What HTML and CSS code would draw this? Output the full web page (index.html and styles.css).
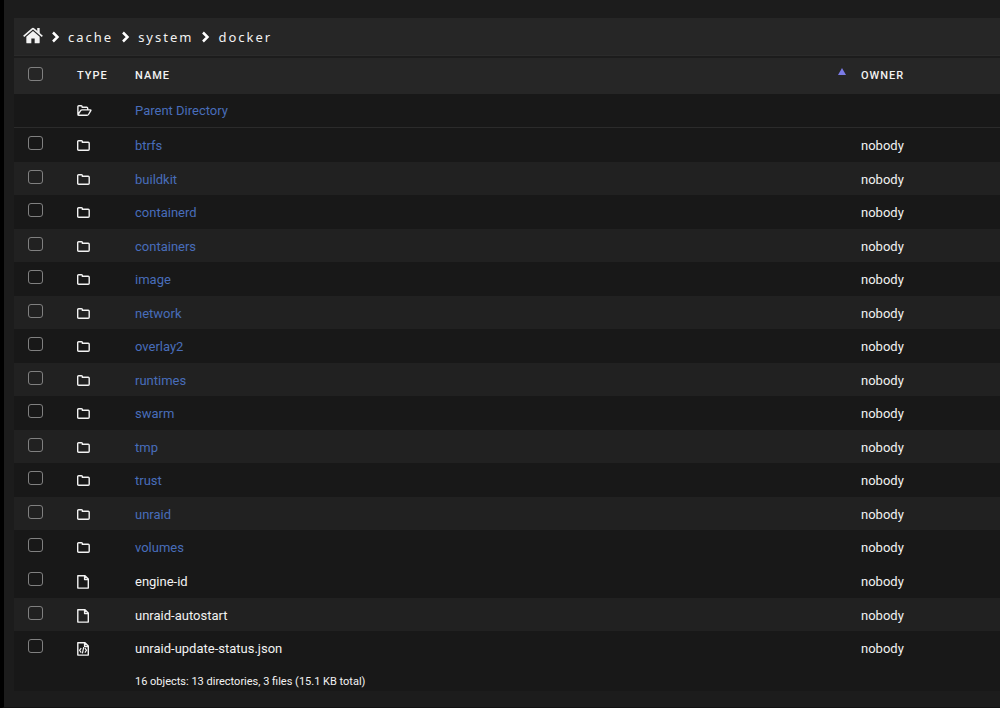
FILE: index.html
```
<!DOCTYPE html>
<html lang="en">
<head>
<meta charset="utf-8">
<title>docker</title>
<link rel="stylesheet" href="styles.css">
</head>
<body>
<svg class="sprite" aria-hidden="true">
  <symbol id="folder" viewBox="0 0 14 14"><path d="M.7 10.300V2.600q0-.9.9-.9H4.500q.9 0 .9.9v.7h5.800q1 0 1 1v6q0 1-1 1H1.700q-1 0-1-1z" fill="none" stroke="currentColor" stroke-width="1.400"/></symbol>
  <symbol id="open" viewBox="0 0 16 14"><path d="M.9 10.200V2.600q0-.9.9-.9h2.400q.9 0 .9.900v.7h4.600q1 0 1 1v1.600M1 10.600l2.600-4q.5-.7 1.400-.7h8.400q.9 0 .4.700l-2.300 3.900q-.5.800-1.400.8H1.700q-1 0-.7-.7z" fill="none" stroke="currentColor" stroke-width="1.400" stroke-linejoin="round"/></symbol>
  <symbol id="file" viewBox="0 0 14 14"><path d="M.8.8h7.200l3.300 3.300v9H.8zM7.600.8v3.700h3.700" fill="none" stroke="currentColor" stroke-width="1.400" stroke-linejoin="round"/></symbol>
  <symbol id="code" viewBox="0 0 14 14"><use href="#file"/><path d="M4.200 6 2.600 8.300l1.600 2.300M7.900 6l1.600 2.300-1.600 2.300M6.700 5.200 5.400 11.400" fill="none" stroke="currentColor" stroke-width="1.200"/></symbol>
  <symbol id="chevron" viewBox="0 0 8 12"><path d="M1.500 1.500 6 6l-4.500 4.500" fill="none" stroke="currentColor" stroke-width="2.500"/></symbol>
</svg>
<main class="page">
  <nav class="crumbs" aria-label="Path">
    <a href="#" aria-label="Home"><svg class="home" viewBox="0 0 18 16"><path d="M9 3.600 3 8.700v5.100q0 .8.800.8h3.700v-4.400h3v4.400h3.700q.8 0 .8-.8V8.700z" fill="currentColor"/><path d="M.6 8.300 8.200 1.800q.8-.7 1.600 0l7.600 6.500" fill="none" stroke="currentColor" stroke-width="1.500"/><path d="M12.800.8H15v5l-2.200-1.900z" fill="currentColor"/></svg></a>
    <svg class="chevron"><use href="#chevron"/></svg>
    <a href="#">cache</a>
    <svg class="chevron"><use href="#chevron"/></svg>
    <a href="#">system</a>
    <svg class="chevron"><use href="#chevron"/></svg>
    <a href="#">docker</a>
  </nav>
  <table class="files">
    <colgroup><col class="col-check"><col class="col-type"><col><col class="col-owner"></colgroup>
    <thead><tr><th><input type="checkbox" aria-label="Select all"></th><th>TYPE</th><th><div class="sorted">NAME<span class="arrow"></span></div></th><th>OWNER</th></tr></thead>
    <tbody class="parent"><tr><td></td><td><svg class="icon open"><use href="#open"/></svg></td><td><a href="#">Parent Directory</a></td><td></td></tr></tbody>
    <tbody class="rows" id="dirs"></tbody>
    <tbody class="rows" id="plain"></tbody>
    <tfoot><tr><td></td><td></td><td colspan="2">16 objects: 13 directories, 3 files (15.1 KB total)</td></tr></tfoot>
  </table>
</main>
<script src="files.js"></script>
</body>
</html>
```

FILE: styles.css
```
* { box-sizing: border-box; }
body {
  margin: 0;
  min-height: 100vh;
  background: #1c1c1c;
  border-left: 4px solid #000;
  border-bottom: 2px solid #121212;
  color: #f2f2f2;
  font: 13px/20px Roboto, "Noto Sans", sans-serif;
}
.sprite { display: none; }
.page { padding: 18px 0 16px 10px; }
.crumbs {
  display: flex;
  align-items: center;
  height: 38px;
  padding: 0 10px 0 9px;
  gap: 8px;
  background: #262626;
  border-bottom: 1px solid #2b2b2b;
  font-family: "Noto Sans", sans-serif;
  font-size: 13px;
  letter-spacing: 2px;
}
.crumbs a { color: #f2f2f2; text-decoration: none; }
.home { display: block; width: 20px; height: 18px; margin-bottom: 2px; }
.chevron { width: 9px; height: 12px; flex: none; color: #fff; }
.files {
  width: 100%;
  margin-top: 2px;
  table-layout: fixed;
  border-collapse: collapse;
  background: #181818;
}
.col-check { width: 63px; }
.col-type { width: 58px; }
.col-owner { width: 139px; }
th, td { padding: 0; text-align: left; vertical-align: middle; }
td:first-child, th:first-child { padding-left: 14px; }
td { padding-top: 2px; }
td:first-child { padding-top: 0; padding-bottom: 4px; }
thead tr { height: 36px; background: #262626; }
th { font-size: 11px; font-weight: 500; letter-spacing: 1px; }
th:first-child { padding-bottom: 4px; }
.sorted { display: flex; justify-content: space-between; }
.arrow {
  margin: 2px 15px 0 0;
  height: 7px;
  border: 4px solid transparent;
  border-top: 0;
  border-bottom: 7px solid #7b7be6;
}
.parent tr { height: 34px; box-shadow: inset 0 -1px #2b2b2b; }
.parent td { padding-top: 0; }
.rows tr { height: 34px; }
.rows tr:nth-child(even) { height: 33px; background: #212121; }
.files a { color: #486dba; text-decoration: none; }
.icon { display: block; width: 14px; height: 14px; }
.icon.open { width: 16px; }
input {
  appearance: none;
  display: block;
  width: 15px;
  height: 14px;
  margin: 0;
  border: 1px solid #808080;
  border-radius: 3px;
  background: transparent;
}
tfoot tr { height: 26px; }
tfoot td { padding-top: 8px; font-size: 11px; line-height: 18px; }
```

FILE: files.js
```
function fill(id, names, linked) {
  document.getElementById(id).innerHTML = names.map(function (name) {
    var icon = linked ? 'folder' : name.endsWith('.json') ? 'code' : 'file';
    var label = linked ? '<a href="#">' + name + '</a>' : name;
    return '<tr><td><input type="checkbox" aria-label="Select ' + name + '"></td>' +
      '<td><svg class="icon"><use href="#' + icon + '"/></svg></td>' +
      '<td>' + label + '</td><td>nobody</td></tr>';
  }).join('');
}
fill('dirs', ['btrfs', 'buildkit', 'containerd', 'containers', 'image', 'network', 'overlay2',
  'runtimes', 'swarm', 'tmp', 'trust', 'unraid', 'volumes'], true);
fill('plain', ['engine-id', 'unraid-autostart', 'unraid-update-status.json'], false);
```
